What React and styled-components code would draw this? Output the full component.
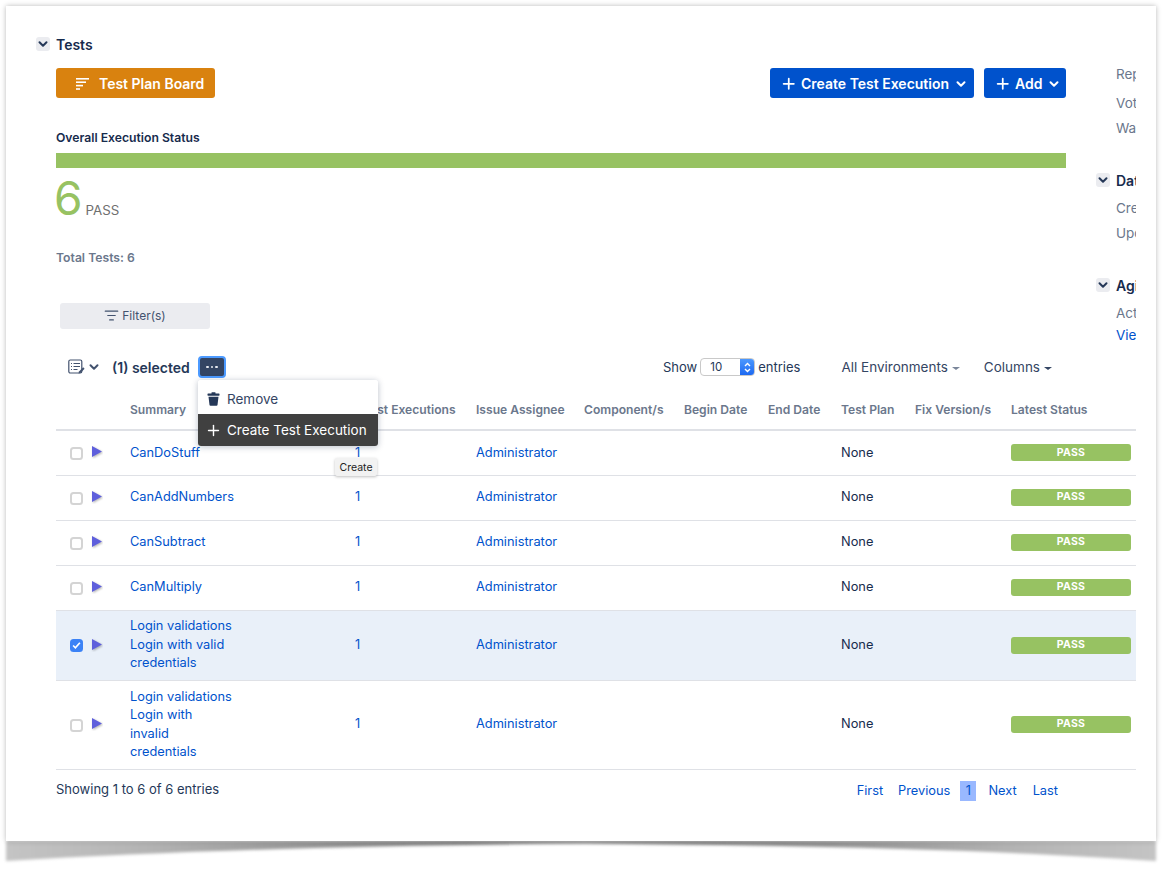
import React from "react";
import styled, { createGlobalStyle } from "styled-components";
import { Plus, ChevronDown, ListFilter } from "lucide-react";

const Global = createGlobalStyle`
  html, body { margin: 0; padding: 0; background: #fff; }
  body { font-family: Inter, "Noto Sans", "Liberation Sans", sans-serif; color: #172b4d; -webkit-font-smoothing: antialiased; }
  * { box-sizing: border-box; }
`;

const Page = styled.div`
  position: relative;
  width: 1170px;
  height: 870px;
  padding: 6px 14px 0 6px;
  overflow: hidden;
`;
const CurlShadow = styled.svg`
  position: absolute;
  left: 0;
  top: 820px;
  width: 1170px;
  height: 50px;
`;
const Card = styled.div`
  position: relative;
  width: 1150px;
  height: 835px;
  background: #fff;
  box-shadow: 0 0 5px rgba(0, 0, 0, 0.28);
  padding-top: 30px;
  overflow: hidden;
`;
const Top = styled.div`
  display: flex;
  height: 318px;
  padding-left: 30px;
`;
const Main = styled.div`
  width: 1060px;
  flex: none;
  padding-right: 30px;
`;
const Section = styled.div`
  display: flex;
  align-items: center;
  gap: 6px;
  height: 16px;
`;
const Toggle = styled.span`
  width: 14px;
  height: 14px;
  flex: none;
  border-radius: 3px;
  background: #ebecf0;
  color: #253858;
  display: flex;
  align-items: center;
  justify-content: center;
`;
const SectionTitle = styled.span`
  font-size: 14px;
  font-weight: 600;
  white-space: nowrap;
  color: #172b4d;
`;
const Body = styled.div`
  padding-left: 20px;
`;
const Actions = styled.div`
  display: flex;
  align-items: center;
  gap: 10px;
  margin-top: 16px;
`;
const Btn = styled.div`
  height: 30px;
  width: ${(p) => p.$w}px;
  border-radius: 3px;
  background: ${(p) => p.$bg || "#0052cc"};
  color: #fff;
  font-size: 14px;
  font-weight: 600;
  display: flex;
  align-items: center;
  padding-left: ${(p) => p.$pl || 9.5}px;
  padding-top: 1px;
  gap: ${(p) => p.$gap || 4}px;
  white-space: nowrap;
`;
const Spacer = styled.div`
  flex: 1;
`;
const BtnCaret = styled.span`
  display: flex;
  margin-left: ${(p) => p.$ml}px;
`;
const StatusLabel = styled.div`
  margin-top: 33px;
  font-size: 12.2px;
  line-height: 14px;
  font-weight: 600;
`;
const Bar = styled.div`
  margin-top: 8px;
  height: 15px;
  background: #97c262;
`;
const Count = styled.div`
  display: flex;
  align-items: baseline;
  margin-top: 5px;
  height: 50px;
`;
const CountNum = styled.span`
  font-size: 46px;
  line-height: 50px;
  margin-left: -2px;
  color: #97c262;
  font-weight: 400;
`;
const CountLabel = styled.span`
  font-size: 13.3px;
  color: #707070;
  margin-left: 3px;
`;
const Total = styled.div`
  margin-top: 25px;
  font-size: 12.2px;
  line-height: 20px;
  font-weight: 600;
  color: #6b778c;
`;
const FilterBtn = styled.div`
  margin: 35px 0 0 4px;
  width: 150px;
  height: 26px;
  border-radius: 3px;
  background: #ebecf0;
  color: #42526e;
  font-size: 12px;
  padding-bottom: 1px;
  display: flex;
  align-items: center;
  justify-content: center;
  gap: 3px;
`;
const Sidebar = styled.div`
  width: 40px;
  flex: none;
  overflow: hidden;
  padding-top: 29px;
`;
const SideBlock = styled.div`
  margin-bottom: ${(p) => p.$mb || 0}px;
`;
const SideHead = styled.div`
  display: flex;
  align-items: center;
  gap: 6px;
  height: 16px;
  margin: 0 0 11px 0;
  width: 100px;
`;
const SideItem = styled.div`
  margin-left: 20px;
  font-size: 13.5px;
  line-height: 18px;
  height: ${(p) => p.$h || 25}px;
  white-space: nowrap;
  color: ${(p) => (p.$link ? "#0052cc" : "#6b778c")};
`;
const Lower = styled.div`
  position: relative;
  margin-left: 50px;
  width: 1080px;
`;
const Toolbar = styled.div`
  display: flex;
  align-items: center;
  height: 26px;
  padding: 0 84px 0 12px;
`;
const SelectIcon = styled.span`
  display: flex;
  align-items: center;
  gap: 2px;
  color: #42526e;
`;
const Selected = styled.span`
  margin-left: 11px;
  font-size: 14px;
  font-weight: 600;
  color: #253858;
`;
const More = styled.div`
  margin-left: 8px;
  width: 28px;
  height: 22px;
  border-radius: 4px;
  background: #344563;
  border: 2px solid #4c9aff;
  color: #fff;
  display: flex;
  align-items: center;
  justify-content: center;
  gap: 2px;
`;
const Dot = styled.i`
  width: 2.5px;
  height: 2.5px;
  border-radius: 50%;
  background: #e8ebf0;
`;
const Show = styled.div`
  margin-left: auto;
  display: flex;
  align-items: center;
  font-size: 13px;
  color: #253858;
`;
const Select = styled.div`
  margin: 0 3px;
  width: 55px;
  height: 18px;
  border: 1px solid #c9c9c9;
  border-radius: 4px;
  display: flex;
  align-items: center;
  justify-content: space-between;
  padding-left: 9px;
  font-size: 11.5px;
  background: #fff;
  overflow: hidden;
`;
const Stepper = styled.span`
  width: 15px;
  height: 18px;
  margin-right: -1px;
  background: linear-gradient(#4f9bff, #1a66f0);
  display: flex;
  align-items: center;
  justify-content: center;
`;
const Menu = styled.div`
  margin-left: ${(p) => p.$ml}px;
  display: flex;
  align-items: center;
  gap: 4px;
  font-size: 13.5px;
  color: #344563;
`;
const Caret = styled.i`
  width: 0;
  height: 0;
  margin-top: 2px;
  border-left: 4px solid transparent;
  border-right: 4px solid transparent;
  border-top: 3.5px solid ${(p) => p.$c};
`;
const Table = styled.table`
  width: 1080px;
  margin-top: 14px;
  table-layout: fixed;
  border-collapse: collapse;
`;
const Th = styled.th`
  height: 36px;
  padding: 0 0 4px ${(p) => p.$pl || 0}px;
  text-align: left;
  font-size: 12.1px;
  font-weight: 600;
  color: #6b778c;
  white-space: nowrap;
  border-bottom: 2px solid #dfe1e6;
`;
const Tr = styled.tr`
  background: ${(p) => (p.$sel ? "#e9f0f9" : "#fff")};
  height: ${(p) => p.$h}px;
`;
const Td = styled.td`
  padding: 0 0 0 ${(p) => p.$pl || 0}px;
  font-size: 12.8px;
  line-height: 18.5px;
  color: ${(p) => (p.$link ? "#0052cc" : "#172b4d")};
  border-bottom: 1px solid #dfe1e6;
  vertical-align: middle;
`;
const LeadCell = styled.div`
  display: flex;
  align-items: center;
  padding-left: 14px;
  gap: 8px;
`;
const Check = styled.span`
  width: 13px;
  height: 13px;
  margin-top: 1px;
  border-radius: 3.5px;
  background: ${(p) => (p.$on ? "#3b82f6" : "#fff")};
  border: ${(p) => (p.$on ? "0" : "2px solid #d4d4d4")};
  display: flex;
  align-items: center;
  justify-content: center;
`;
const Play = styled.svg`
  width: 12px;
  height: 14px;
  margin-top: -1px;
`;
const Badge = styled.div`
  width: 120px;
  height: 17px;
  border-radius: 3px;
  background: #97c262;
  color: #fff;
  font-size: 10.5px;
  font-weight: 700;
  letter-spacing: 0.3px;
  display: flex;
  align-items: center;
  justify-content: center;
`;
const Footer = styled.div`
  display: flex;
  align-items: flex-start;
  padding: 10px 78px 0 0;
  font-size: 13px;
`;
const Info = styled.span`
  line-height: 18px;
  color: #253858;
`;
const Pager = styled.div`
  margin-left: auto;
  display: flex;
  align-items: center;
  font-size: 12.8px;
  color: #0052cc;
`;
const PageLink = styled.span`
  margin-left: ${(p) => p.$ml || 0}px;
  line-height: 20px;
  margin-top: 1px;
`;
const PageNow = styled.span`
  margin-left: 10px;
  width: 16px;
  height: 20px;
  background: #99b8ff;
  display: flex;
  align-items: center;
  justify-content: center;
  margin-top: 1px;
`;
const Dropdown = styled.div`
  position: absolute;
  left: 142px;
  top: 26px;
  width: 180px;
  background: #fff;
  border-radius: 3px;
  box-shadow: 0 1px 6px rgba(9, 30, 66, 0.28);
  overflow: hidden;
  z-index: 3;
`;
const DropItem = styled.div`
  height: ${(p) => p.$h}px;
  display: flex;
  align-items: center;
  padding-left: 7px;
  gap: 5px;
  font-size: 13.5px;
  white-space: nowrap;
  background: ${(p) => (p.$active ? "#404040" : "#fff")};
  color: ${(p) => (p.$active ? "#fff" : "#344563")};
  padding-top: ${(p) => (p.$active ? 0 : 4)}px;
`;
const Tip = styled.div`
  position: absolute;
  left: 279px;
  top: 104px;
  width: 42px;
  height: 18px;
  background: #f2f2f2;
  border-radius: 2px;
  box-shadow: 0 1px 3px rgba(0, 0, 0, 0.25);
  font-size: 10.5px;
  color: #222;
  display: flex;
  align-items: center;
  justify-content: center;
  z-index: 4;
`;

const SmallChevron = () => <ChevronDown size={14} strokeWidth={3.4} />;

const rows = [
  { h: 45, lines: ["CanDoStuff"] },
  { h: 45, lines: ["CanAddNumbers"] },
  { h: 45, lines: ["CanSubtract"] },
  { h: 45, lines: ["CanMultiply"] },
  { h: 70, lines: ["Login validations", "Login with valid", "credentials"], sel: true },
  { h: 89, lines: ["Login validations", "Login with", "invalid", "credentials"] },
];

const heads = [
  ["Summary", 211, 0],
  ["Test Executions", 135, 22],
  ["Issue Assignee", 108, 0],
  ["Component/s", 100, 0],
  ["Begin Date", 84, 0],
  ["End Date", 73, 0],
  ["Test Plan", 74, 0],
  ["Fix Version/s", 96, 0],
  ["Latest Status", 125, 0],
];

export default function App() {
  return (
    <Page>
      <Global />
      <CurlShadow viewBox="0 0 1170 50">
        <defs>
          <filter id="curl" x="-5%" y="-50%" width="110%" height="200%">
            <feGaussianBlur stdDeviation="1.6" />
          </filter>
          <linearGradient id="curlFill" x1="0" x2="1" y1="0" y2="0">
            <stop offset="0" stopColor="#c4c4c4" />
            <stop offset="0.12" stopColor="#b4b4b4" />
            <stop offset="0.4" stopColor="#7a7a7a" />
            <stop offset="0.6" stopColor="#7a7a7a" />
            <stop offset="0.88" stopColor="#b4b4b4" />
            <stop offset="1" stopColor="#c4c4c4" />
          </linearGradient>
        </defs>
        <path d="M6 21 L1156 21 L1156 41 C1000 30 800 25 585 23.500 C370 25 170 31 6 41 Z" fill="url(#curlFill)" filter="url(#curl)" />
      </CurlShadow>
      <Card>
        <Top>
          <Main>
            <Section>
              <Toggle><SmallChevron /></Toggle>
              <SectionTitle>Tests</SectionTitle>
            </Section>
            <Body>
              <Actions>
                <Btn $w={159} $bg="#d9820f" $pl={19} $gap={10}>
                  <svg width="14" height="14" viewBox="0 0 14 14" fill="#fff">
                    <rect x="1" y="1" width="13" height="1.6" />
                    <rect x="1" y="4.4" width="10" height="1.6" />
                    <rect x="1" y="7.8" width="7" height="1.6" />
                    <rect x="1" y="11.2" width="4" height="1.6" />
                  </svg>
                  Test Plan Board
                </Btn>
                <Spacer />
                <Btn $w={204}>
                  <Plus size={17.5} strokeWidth={2.4} />
                  Create Test Execution
                  <BtnCaret $ml={1}><SmallChevron /></BtnCaret>
                </Btn>
                <Btn $w={82}>
                  <Plus size={17.5} strokeWidth={2.4} />
                  Add
                  <BtnCaret $ml={1}><SmallChevron /></BtnCaret>
                </Btn>
              </Actions>
              <StatusLabel>Overall Execution Status</StatusLabel>
              <Bar />
              <Count>
                <CountNum>6</CountNum>
                <CountLabel>PASS</CountLabel>
              </Count>
              <Total>Total Tests: 6</Total>
              <FilterBtn>
                <ListFilter size={15} strokeWidth={1.8} />
                Filter(s)
              </FilterBtn>
            </Body>
          </Main>
          <Sidebar>
            <SideBlock $mb={28}>
              <SideItem $h={29}>Reporter:</SideItem>
              <SideItem>Votes:</SideItem>
              <SideItem>Watchers:</SideItem>
            </SideBlock>
            <SideBlock $mb={28}>
              <SideHead><Toggle><SmallChevron /></Toggle><SectionTitle>Dates</SectionTitle></SideHead>
              <SideItem>Created:</SideItem>
              <SideItem>Updated:</SideItem>
            </SideBlock>
            <SideBlock>
              <SideHead><Toggle><SmallChevron /></Toggle><SectionTitle>Agile</SectionTitle></SideHead>
              <SideItem $h={22}>Active Sprint:</SideItem>
              <SideItem $link>View on Board</SideItem>
            </SideBlock>
          </Sidebar>
        </Top>
        <Lower>
          <Toolbar>
            <SelectIcon>
              <svg width="17" height="16" viewBox="0 0 17 16" fill="none" stroke="#42526e" strokeWidth="1.2">
                <rect x="0.8" y="1" width="13" height="13" rx="1.5" />
                <path d="M3 4.5h1M5.5 4.500h6.500M3 7.500h1M5.500 7.500h6.500M3 10.500h1M5.500 10.500h4" />
                <path d="M10.500 14.500l.5-2 4.200-4.200 1.400 1.400-4.200 4.200z" fill="#42526e" stroke="none" />
              </svg>
              <SmallChevron />
            </SelectIcon>
            <Selected>(1) selected</Selected>
            <More><Dot /><Dot /><Dot /></More>
            <Show>
              Show
              <Select>
                10
                <Stepper>
                  <svg width="9" height="13" viewBox="0 0 9 13" fill="none" stroke="#fff" strokeWidth="1.4">
                    <path d="M2 5l2.500-2.500L7 5M2 8l2.500 2.500L7 8" />
                  </svg>
                </Stepper>
              </Select>
              entries
            </Show>
            <Menu $ml={41}>All Environments <Caret $c="#7a869a" /></Menu>
            <Menu $ml={24}>Columns <Caret $c="#344563" /></Menu>
          </Toolbar>
          <Table>
            <colgroup>
              <col style={{ width: 74 }} />
              {heads.map(([name, w]) => <col key={name} style={{ width: w }} />)}
            </colgroup>
            <thead>
              <tr>
                <Th />
                {heads.map(([name, , pl]) => <Th key={name} $pl={pl}>{name}</Th>)}
              </tr>
            </thead>
            <tbody>
              {rows.map((r, i) => (
                <Tr key={i} $h={r.h} $sel={r.sel}>
                  <Td>
                    <LeadCell>
                      <Check $on={r.sel}>
                        {r.sel && (
                          <svg width="9" height="9" viewBox="0 0 8 8" fill="none" stroke="#fff" strokeWidth="1.500">
                            <path d="M1 4l2 2 4-4.500" />
                          </svg>
                        )}
                      </Check>
                      <Play viewBox="0 0 12 14">
                        <path d="M1 1l10 5.500-10 5.500z" fill="#5e5fdc" style={{ filter: "drop-shadow(1px 1px 1px rgba(0,0,0,.3))" }} />
                      </Play>
                    </LeadCell>
                  </Td>
                  <Td $link>{r.lines.map((l) => <div key={l}>{l}</div>)}</Td>
                  <Td $link $pl={14}>1</Td>
                  <Td $link>Administrator</Td>
                  <Td />
                  <Td />
                  <Td />
                  <Td>None</Td>
                  <Td />
                  <Td><Badge>PASS</Badge></Td>
                </Tr>
              ))}
            </tbody>
          </Table>
          <Footer>
            <Info>Showing 1 to 6 of 6 entries</Info>
            <Pager>
              <PageLink>First</PageLink>
              <PageLink $ml={15}>Previous</PageLink>
              <PageNow>1</PageNow>
              <PageLink $ml={12}>Next</PageLink>
              <PageLink $ml={16}>Last</PageLink>
            </Pager>
          </Footer>
          <Dropdown>
            <DropItem $h={34}>
              <svg width="17" height="14" viewBox="0 0 17 14" fill="#253858">
                <rect x="2.500" y="1.500" width="12" height="2.200" rx="0.6" />
                <rect x="6.500" y="0.300" width="4" height="2" rx="0.5" />
                <path d="M3.500 4.800h10l-1 8.200a1 1 0 0 1-1 .8h-6a1 1 0 0 1-1-.8z" />
              </svg>
              Remove
            </DropItem>
            <DropItem $h={32} $active><Plus size={17} strokeWidth={2} />Create Test Execution</DropItem>
          </Dropdown>
          <Tip>Create</Tip>
        </Lower>
      </Card>
    </Page>
  );
}
